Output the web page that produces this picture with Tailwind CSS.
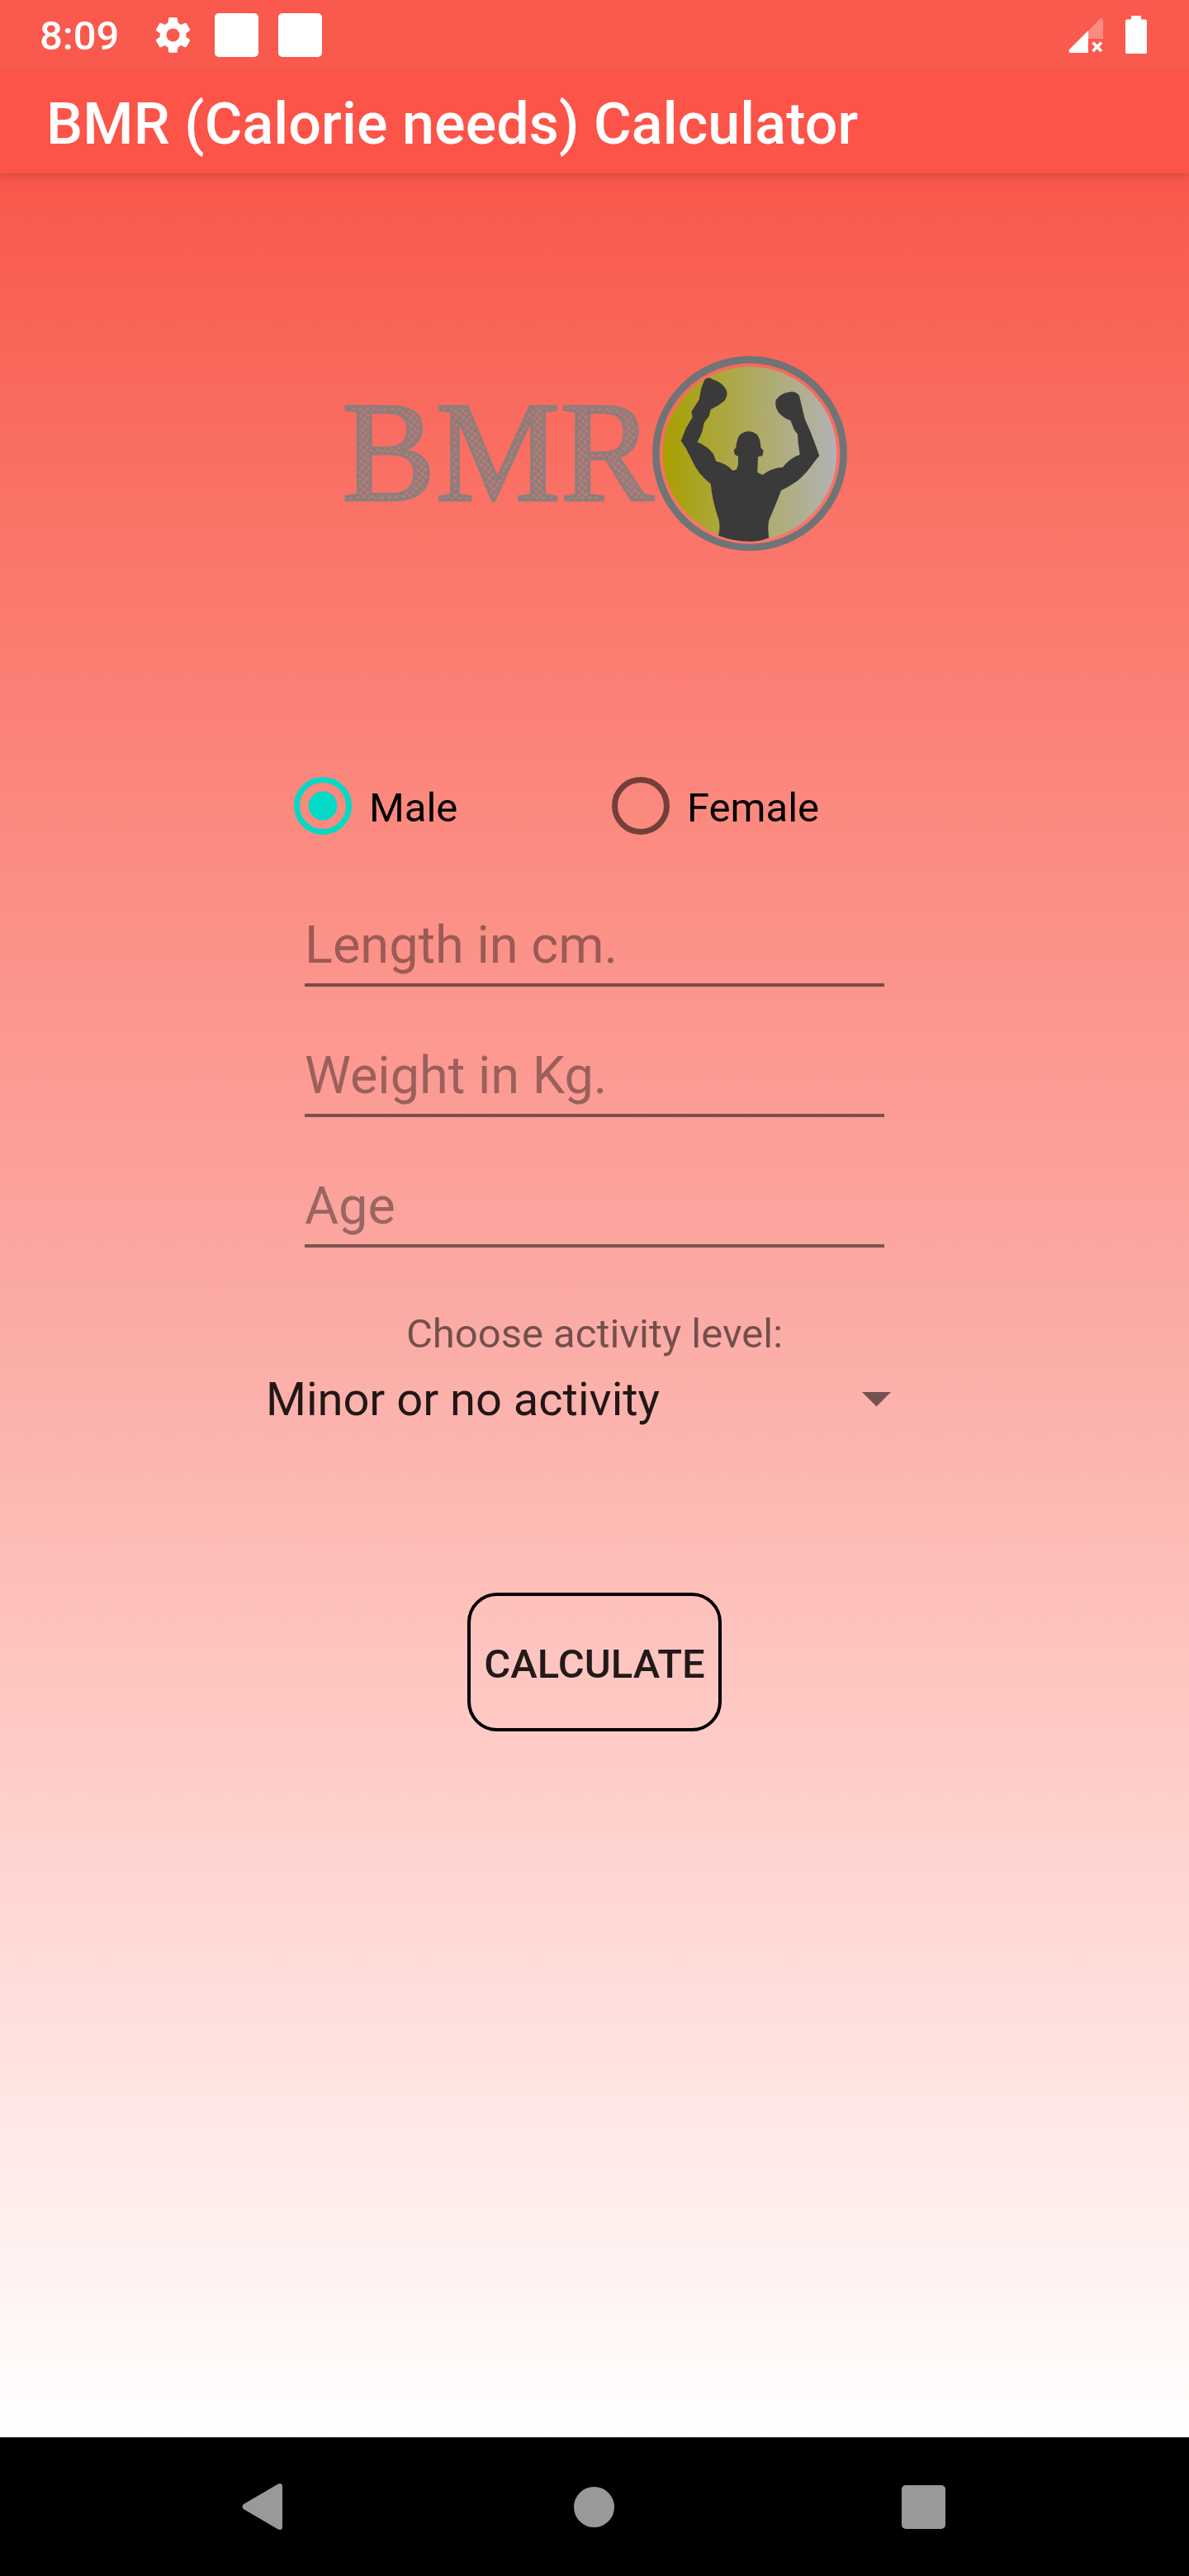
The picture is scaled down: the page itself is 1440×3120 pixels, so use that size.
<!DOCTYPE html>
<html lang="en">
<head>
<meta charset="utf-8">
<title>BMR (Calorie needs) Calculator</title>
<script src="https://cdn.jsdelivr.net/npm/@tailwindcss/browser@4"></script>
</head>
<body class="w-[1440px] h-[3120px] overflow-hidden font-['Roboto',sans-serif]">
<div class="flex flex-col w-[1440px] h-[3120px]">
  <!-- Status bar -->
  <div class="flex items-center h-[84px] shrink-0 bg-[#fa594d] text-white pl-12">
    <span class="text-[49px] leading-[58px] font-medium w-[135px] pt-[4px]">8:09</span>
    <svg class="size-[53px]" viewBox="0 0 24 24" fill="#fff"><path d="M19.14 12.94c.04-.3.06-.61.06-.94 0-.32-.02-.64-.07-.94l2.03-1.58c.18-.14.23-.41.12-.61l-1.92-3.32c-.12-.22-.37-.29-.59-.22l-2.39.96c-.5-.38-1.03-.7-1.62-.94l-.36-2.54c-.04-.24-.24-.41-.48-.41h-3.84c-.24 0-.43.17-.47.41l-.36 2.54c-.59.24-1.13.57-1.62.94l-2.39-.96c-.22-.08-.47 0-.59.22L2.74 8.87c-.12.21-.08.47.12.61l2.03 1.58c-.05.3-.09.63-.09.94s.02.64.07.94l-2.03 1.58c-.18.14-.23.41-.12.61l1.92 3.32c.12.22.37.29.59.22l2.39-.96c.5.38 1.03.7 1.62.94l.36 2.54c.05.24.24.41.48.41h3.84c.24 0 .44-.17.47-.41l.36-2.54c.59-.24 1.13-.56 1.62-.94l2.39.96c.22.08.47 0 .59-.22l1.92-3.32c.12-.22.07-.47-.12-.61zM12 15.6c-1.98 0-3.6-1.62-3.6-3.6s1.62-3.6 3.6-3.6 3.6 1.62 3.6 3.6-1.62 3.6-3.6 3.6z"/></svg>
    <div class="size-[53px] ml-6 rounded-[5px] bg-white"></div>
    <div class="size-[53px] ml-6 rounded-[5px] bg-white"></div>
    <svg class="ml-[904px] w-[42px] h-[42px] mt-[2px]" viewBox="0 0 42 42"><path d="M24 15V25H42V2.500Q41-1 38 1Z" fill="#fff" fill-opacity=".3"/><path d="M24 15V42H2.500Q-1 41 1 38Z" fill="#fff"/><path d="M29.500 29.500L40 40M40 29.500L29.500 40" stroke="#fff" stroke-width="3.600"/></svg>
    <svg class="ml-[27px] w-[26px] h-[46px]" viewBox="0 0 26 46"><path d="M7 0H19V4.500H24Q26 4.500 26 6.500V44Q26 46 24 46H2Q0 46 0 44V6.500Q0 4.500 2 4.500H7Z" fill="#fff"/></svg>
  </div>
  <!-- App bar -->
  <header class="relative flex items-center h-[126px] shrink-0 bg-[#fc5448] pl-14 pt-[6px] shadow-[0_3px_9px_rgba(0,0,0,0.16)]">
    <h1 class="text-[70px] leading-[82px] tracking-[0.11px] font-medium text-white whitespace-nowrap">BMR (Calorie needs) Calculator</h1>
  </header>
  <main class="flex flex-col items-center h-[2742px] shrink-0 bg-linear-to-b from-[#f8574b] via-[#fbaaa4] to-white">
    <svg class="mt-[210px] w-[640px] h-[260px] shrink-0" viewBox="0 0 640 260">
      <defs>
        <pattern id="sketch" width="6" height="6" patternUnits="userSpaceOnUse" patternTransform="rotate(40)">
          <rect width="6" height="6" fill="#808080" fill-opacity=".4"/>
          <path d="M0 1.300H6M1.300 0V6" stroke="#808080" stroke-width="2"/>
        </pattern>
        <linearGradient id="disc"><stop offset="0" stop-color="#a8a000"/><stop offset=".5" stop-color="#aeaa5c"/><stop offset="1" stop-color="#b2b2b6"/></linearGradient>
      </defs>
      <text x="14" y="186" textLength="378" lengthAdjust="spacingAndGlyphs" font-family="Liberation Serif, serif" font-size="174" fill="url(#sketch)" stroke="#808080" stroke-opacity=".8" stroke-width="3">BMR</text>
      <g transform="translate(380 0) scale(.33333)">
        <circle cx="384" cy="388" r="316" fill="url(#disc)"/>
        <circle cx="384" cy="388" r="341" fill="none" stroke="#6f7476" stroke-width="26"/>
        <path fill="#3a3a3a" d="M220 120Q232 106 248 118Q285 130 300 158Q306 180 290 198Q270 215 242 228L236 252L218 276Q212 318 193 346Q232 362 252 390L262 416Q300 424 322 450L336 446L342 428V398L330 392L326 376L334 366Q338 330 350 318Q380 296 410 318Q424 336 424 366L434 378L430 396L414 400L412 456L430 466Q462 440 504 438Q532 402 566 392L560 350L558 318L546 302L532 268Q508 260 490 240Q472 214 480 192Q496 168 530 164Q552 160 564 178L574 220L584 262L606 312L624 360L637 396L620 416Q590 460 556 488Q530 506 498 522Q480 570 454 630Q448 660 454 694Q430 706 384 708Q320 706 270 686Q278 660 272 630Q248 560 242 498Q196 462 176 416L152 368L134 342L152 296L176 256L172 236L200 192L208 150Z"/>
      </g>
    </svg>
    <!-- Gender -->
    <div class="flex items-center w-[728px] h-[112px] mt-[240px] shrink-0">
      <div class="flex items-center w-[385px]">
        <svg class="size-[70px]" viewBox="0 0 70 70"><circle cx="35" cy="35" r="31.500" fill="none" stroke="#03dac5" stroke-width="7"/><circle cx="35" cy="35" r="17.500" fill="#03dac5"/></svg>
        <span class="ml-[21px] mt-[5px] text-[49px] leading-[58px]">Male</span>
      </div>
      <div class="flex items-center">
        <svg class="size-[70px]" viewBox="0 0 70 70"><circle cx="35" cy="35" r="31.500" fill="none" stroke="#000" stroke-opacity=".54" stroke-width="7"/></svg>
        <span class="ml-[21px] mt-[5px] text-[49px] leading-[58px]">Female</span>
      </div>
    </div>
    <!-- Measurements -->
    <div class="w-[702px] mt-[5px] shrink-0 text-[63px] leading-[74px] text-black/38">
      <div class="flex items-end h-[158px] pb-[9px] border-b-4 border-black/50">Length in cm.</div>
      <div class="flex items-end h-[158px] pb-[9px] border-b-4 border-black/50">Weight in Kg.</div>
      <div class="flex items-end h-[158px] pb-[9px] border-b-4 border-black/50">Age</div>
    </div>
    <p class="mt-[76px] text-[49px] leading-[58px] text-black/54 shrink-0">Choose activity level:</p>
    <div class="flex items-center justify-between w-[758px] h-[84px] mt-[8px] pr-[20px] shrink-0">
      <span class="-ml-[19px] text-[56px] leading-[66px] text-black/87">Minor or no activity</span>
      <svg class="w-[35px] h-[18px]" viewBox="0 0 35 18"><path d="M0 0H35L17.500 17.500Z" fill="#000" fill-opacity=".54"/></svg>
    </div>
    <button class="flex items-center justify-center w-[308px] h-[168px] mt-[192px] shrink-0 rounded-[36px] border-4 border-black pt-[5px] text-[49px] leading-[58px] font-medium text-black/87">CALCULATE</button>
  </main>
  <!-- Navigation bar -->
  <nav class="flex items-center h-[168px] shrink-0 bg-black pl-[293px]">
    <svg class="w-[49px] h-[58px]" viewBox="0 0 49 58"><path d="M43 2Q49-1 49 5V53Q49 59 43 56L2 32Q-1 29 2 26Z" fill="#999"/></svg>
    <div class="size-[49px] ml-[353px] rounded-full bg-[#999]"></div>
    <div class="w-[53px] h-[53px] ml-[348px] rounded-[5px] bg-[#999]"></div>
  </nav>
</div>
</body>
</html>
